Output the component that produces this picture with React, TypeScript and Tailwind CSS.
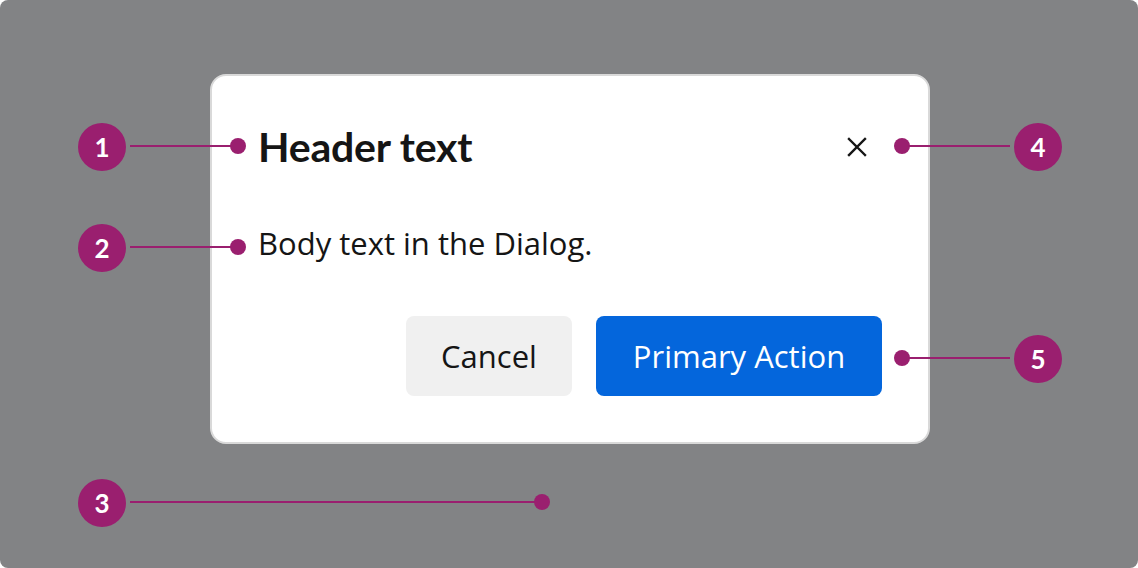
import React from 'react'

const callouts = [
  { n: '1', cx: 102, cy: 147, lineFrom: 130, lineTo: 238 },
  { n: '2', cx: 102, cy: 248, lineFrom: 130, lineTo: 238 },
  { n: '3', cx: 102, cy: 503, lineFrom: 130, lineTo: 542 },
]

const rightCallouts = [
  { n: '4', cx: 1038, cy: 147, dot: 902 },
  { n: '5', cx: 1038, cy: 359, dot: 902 },
]

function Badge({ n, cx, cy }: { n: string; cx: number; cy: number }) {
  return (
    <div
      className="absolute w-12 h-12 rounded-full bg-[#9a1f6f] text-white flex items-center justify-center text-[26px] font-bold font-['Lato',sans-serif]"
      style={{ left: cx - 24, top: cy - 24 }}
    >
      {n}
    </div>
  )
}

function Dot({ cx, cy }: { cx: number; cy: number }) {
  return (
    <div
      className="absolute w-4 h-4 rounded-full bg-[#9a1f6f]"
      style={{ left: cx - 8, top: cy - 8 }}
    />
  )
}

function Line({ x1, x2, y }: { x1: number; x2: number; y: number }) {
  return (
    <div
      className="absolute h-[2px] bg-[#9a1f6f]"
      style={{ left: x1, width: x2 - x1, top: y - 1 }}
    />
  )
}

export default function App() {
  return (
    <div className="w-[1138px] h-[568px] bg-white font-['Open_Sans',sans-serif]">
      <div className="relative w-full h-full rounded-lg bg-[#828385] pt-[74px] pl-[210px]">
        {/* dialog */}
        <div className="w-[720px] h-[370px] bg-white border-2 border-[#d9d9d9] rounded-2xl pl-[46px] pr-[46px] pt-[46px] flex flex-col">
          <div className="flex items-center justify-between h-[50px]">
            <h2 className="font-['Lato',sans-serif] text-[41px] leading-[50px] font-bold text-[#151515] tracking-[-0.2px]">Header text</h2>
            <button className="w-[50px] h-[50px] flex items-center justify-center text-[#151515]">
              <svg width="20" height="20" viewBox="0 0 20 20" fill="none" stroke="currentColor" strokeWidth="2.4" strokeLinecap="square">
                <path d="M2 2 L18 18 M18 2 L2 18" />
              </svg>
            </button>
          </div>
          <p className="mt-[51px] text-[31px] leading-[40px] text-[#151515]">Body text in the Dialog.</p>
          <div className="mt-[53px] flex justify-end gap-6">
            <button className="w-[166px] h-20 rounded-lg bg-[#f0f0f0] text-[#151515] text-[31px] leading-[38px]">Cancel</button>
            <button className="w-[286px] h-20 rounded-lg bg-[#0466dc] text-white text-[31px] leading-[38px]">Primary Action</button>
          </div>
        </div>

        {/* annotations */}
        {callouts.map((c) => (
          <React.Fragment key={c.n}>
            <Badge n={c.n} cx={c.cx} cy={c.cy} />
            <Line x1={c.lineFrom} x2={c.lineTo} y={c.cy - 1} />
            <Dot cx={c.lineTo} cy={c.cy - 1} />
          </React.Fragment>
        ))}
        {rightCallouts.map((c) => (
          <React.Fragment key={c.n}>
            <Badge n={c.n} cx={c.cx} cy={c.cy} />
            <Line x1={c.dot} x2={c.cx - 28} y={c.cy - 1} />
            <Dot cx={c.dot} cy={c.cy - 1} />
          </React.Fragment>
        ))}
      </div>
    </div>
  )
}
